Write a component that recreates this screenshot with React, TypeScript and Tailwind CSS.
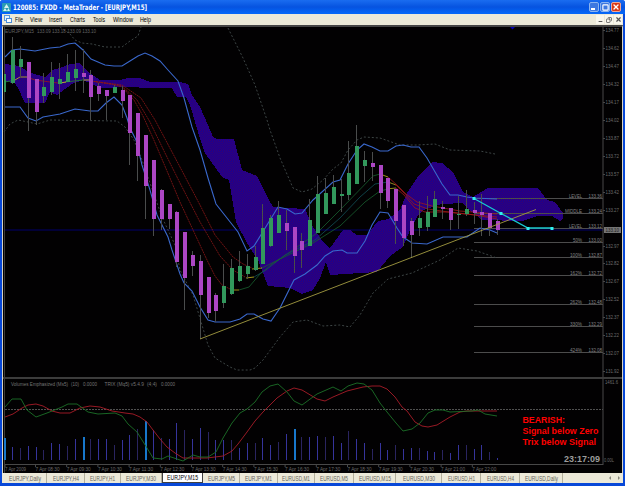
import { Minus, Copy, X, Square } from 'lucide-react';

type Candle = [high: number, top: number, bottom: number, low: number, up: 0 | 1];

const candles: Candle[] = [
  [74, 74, 92, 92, 1], [37, 50, 83, 84, 1], [46, 59, 67, 78, 1], [62, 62, 98, 131, 0],
  [79, 79, 112, 125, 0], [73, 87, 96, 103, 1], [62, 77, 92, 95, 1], [63, 79, 84, 99, 1],
  [54, 72, 82, 82, 1], [50, 69, 78, 91, 1], [49, 73, 77, 93, 0], [70, 75, 97, 120, 0],
  [83, 86, 94, 101, 0], [90, 90, 96, 120, 0], [85, 87, 93, 93, 1], [86, 90, 101, 118, 0],
  [95, 95, 133, 165, 0], [113, 113, 156, 181, 0], [135, 135, 186, 219, 0], [160, 160, 219, 236, 0],
  [189, 190, 219, 230, 0], [204, 204, 219, 229, 0], [211, 212, 262, 267, 0], [232, 232, 278, 310, 0],
  [251, 255, 266, 276, 0], [255, 261, 295, 339, 0], [277, 277, 313, 318, 0], [293, 295, 311, 322, 0],
  [264, 286, 303, 308, 1], [259, 268, 294, 295, 1], [251, 266, 281, 282, 1], [254, 266, 274, 279, 1],
  [246, 257, 270, 271, 1], [204, 228, 264, 264, 1], [215, 218, 246, 247, 1], [201, 215, 233, 233, 1],
  [210, 223, 231, 250, 0], [227, 227, 256, 273, 0], [233, 241, 250, 268, 0], [199, 220, 246, 246, 1],
  [176, 194, 233, 233, 1], [178, 193, 214, 214, 1], [175, 187, 204, 204, 1], [179, 194, 196, 212, 1],
  [141, 173, 195, 200, 1], [125, 146, 184, 184, 1], [151, 160, 166, 182, 1], [152, 163, 167, 181, 0],
  [165, 165, 193, 209, 0], [178, 178, 201, 208, 0], [189, 189, 221, 244, 0], [205, 205, 238, 246, 0],
  [218, 221, 235, 258, 0], [201, 218, 228, 236, 1], [196, 212, 227, 231, 1], [191, 199, 217, 217, 1],
  [201, 207, 209, 219, 0], [208, 208, 220, 230, 0], [196, 214, 215, 229, 1], [190, 209, 214, 216, 1],
  [202, 210, 213, 224, 0], [194, 212, 215, 236, 0], [213, 213, 228, 236, 0], [219, 221, 230, 235, 0],
];

// tops of the volume bars, they all stand on y = 460
const volumes = [
  438, 447, 448, 446, 447, 450, 443, 444, 446, 439, 437, 439, 439, 439, 445, 440,
  435, 429, 421, 430, 438, 439, 423, 430, 439, 428, 432, 440, 440, 440, 448, 443,
  443, 438, 445, 442, 434, 429, 437, 437, 436, 437, 436, 443, 431, 439, 443, 449,
  443, 450, 445, 449, 448, 448, 451, 452, 450, 453, 445, 445, 449, 445, 452, 458,
];
const spikes = [0, 10, 18, 37];

const upperBand =
  '5,57 12,50 20,49 35,51 50,48 60,47 68,44 75,43 83,50 91,59 105,65 114,66 122,66 130,61 138,56 145,53 152,56 160,61 168,70 178,81 184,98 192,127 200,150 208,178 216,204 227,218 238,232 247,251 254,246 267,225 278,207 287,209 295,214 302,213 313,200 333,182 340,180 348,164 357,150 364,144 372,147 380,151 388,151 396,146 403,145 411,147 419,147 427,158 442,184 450,195 458,195 467,197 474,198 497,199';
const lowerBand =
  '5,107 20,107 28,118 36,121 43,117 60,114 75,109 90,111 98,111 106,103 114,97 122,105 127,118 130,128 136,140 142,165 150,190 157,215 168,237 172,250 180,274 184,283 192,291 200,307 208,320 215,322 230,322 240,319 247,314 254,314 263,319 271,321 280,308 294,280 305,274 317,265 325,256 333,251 342,250 347,253 357,253 365,241 372,225 380,212 388,213 397,228 403,237 412,243 427,244 443,237 467,237 480,228 490,230 497,233';
const outerBands = [
  '60,27 70,34 75,40 82,43 92,44 105,47 122,47 130,41 138,36 141,27',
  '228,28 243,58 255,85 267,120 270,130 280,158 293,188 302,192 312,189 323,180 333,169 341,163 348,150 357,140 364,137 380,138 400,145 417,145 435,144 450,150 480,151 495,154',
  '4,132 10,124 18,120 28,122 37,124 50,120 117,121 125,127 134,140 142,160 150,183 162,217 175,245 180,270 193,295 202,325 208,345 215,358 230,367 237,370 250,370 255,368 263,360 280,337 293,322 307,320 323,326 340,325 350,327 360,315 373,293 388,279 412,273 440,260 458,248 477,251 497,258',
];
const cloud =
  '5,64 20,66 28,72 45,77 52,70 60,68 70,64 80,63 88,72 100,80 120,80 128,78 140,78 150,82 180,82 188,84 192,95 200,107 205,118 213,137 217,139 234,139 242,170 257,176 268,198 273,207 305,209 313,227 323,242 330,248 343,230 350,230 357,235 367,235 378,221 388,219 400,210 407,193 417,178 432,162 442,163 453,172 463,192 473,197 488,188 538,188 547,200 555,202 563,213 563,218 560,221 552,216 537,216 522,221 482,220 467,208 463,203 442,204 423,210 417,217 410,230 403,247 390,256 377,272 330,275 326,262 320,278 313,290 302,294 290,288 268,286 258,260 247,243 236,222 229,180 222,177 205,153 198,132 190,105 186,97 177,97 172,88 150,88 127,87 100,88 92,84 83,80 72,84 57,95 50,92 45,103 25,103 18,88 15,83 5,82';

const averages: [string, string][] = [
  ['#1f8f1f', '5,82 15,80'],
  ['#c8b820', '15,80 20,77 27,77'],
  ['#a01818', '27,77 35,80 58,83'],
  ['#1f8f1f', '65,82 83,80'],
  ['#e0d020', '60,83 66,82'],
  ['#e0d020', '83,80 91,80'],
  ['#8c1818', '91,81 112,84 122,87 134,100 143,116 153,138 167,171 180,202 207,260 215,276 222,285 230,289'],
  ['#8c1818', '91,81 122,86 137,100 150,122 165,153 180,183 200,222 220,256 233,270 245,277'],
  ['#8c1818', '91,81 122,85 141,98 155,120 180,167 200,205 215,235 233,257 243,264 252,268'],
  ['#c8b820', '230,290 239,290'],
  ['#c8b820', '246,278 254,277'],
  ['#c8b820', '252,269 262,268'],
  ['#186030', '239,290 249,287 260,274 272,264 290,252 317,233 340,210 373,176 380,174'],
  ['#125058', '254,277 266,270 285,255 315,240 340,218 360,197 375,184 388,182'],
  ['#186030', '262,268 280,259 313,243 340,226 365,202 380,191 388,189'],
  ['#c8b820', '380,174 388,177'],
  ['#b8a828', '388,182 396,185'],
  ['#b8a828', '386,189 396,188'],
  ['#a01818', '388,177 398,186 406,194 417,202 432,206 460,211 497,214'],
  ['#a01818', '395,184 403,192 414,204 428,209 455,213 497,217'],
  ['#a01818', '396,188 404,195 415,208 425,212 450,212 475,215 497,219'],
];

const trix =
  '5,407 12,399 21,399 27,410 36,417 47,413 62,407 68,404 77,404 88,412 98,414 115,413 122,416 128,424 137,432 147,448 153,458 162,459 168,456 177,459 183,461 193,455 200,457 208,457 216,452 223,438 232,423 240,413 247,409 255,402 262,392 270,386 278,384 287,392 294,401 302,405 317,394 333,387 341,391 348,386 357,383 364,384 372,390 380,403 387,412 396,423 403,431 412,429 420,423 428,413 435,410 443,410 450,412 472,411 478,410 485,414 497,416';
const signal =
  '5,417 13,414 22,408 28,405 36,404 43,406 52,411 60,413 70,413 80,408 90,406 100,407 112,411 125,413 133,414 140,417 147,422 153,430 160,439 167,447 175,453 183,458 207,458 223,456 232,451 238,444 247,432 255,421 263,412 277,398 287,391 294,388 302,390 317,399 325,401 333,397 347,391 363,387 372,386 380,386 387,389 395,397 402,407 407,411 415,422 422,426 428,427 437,425 450,417 460,412 467,411 497,411';

const levels: [number, string, number, string][] = [
  [198, 'LEVEL', 13, '133.36'], [213, 'MIDDLE', 17, '133.24'], [228, 'LEVEL', 13, '133.12'],
  [242, '50%', 9, '133.00'], [257, '100%', 12, '132.87'], [275, '162%', 12, '132.72'],
  [304, '262%', 12, '132.48'], [326, '330%', 12, '132.29'], [352, '424%', 12, '132.08'],
];

const prices: [number, string][] = [
  [30, '134.77'], [48, '134.62'], [66, '134.47'], [84, '134.32'], [102, '134.17'],
  [120, '134.02'], [138, '133.87'], [156, '133.72'], [174, '133.57'], [192, '133.42'],
  [210, '133.27'], [246, '132.97'], [263, '132.82'], [281, '132.67'], [299, '132.52'],
  [317, '132.37'], [335, '132.22'], [353, '132.07'], [371, '131.92'],
];

const times = [
  '7 Apr 2009', '7 Apr 08:30', '7 Apr 09:30', '7 Apr 10:30', '7 Apr 11:30', '7 Apr 12:30', '7 Apr 13:30',
  '7 Apr 14:30', '7 Apr 15:30', '7 Apr 16:30', '7 Apr 17:30', '7 Apr 18:30', '7 Apr 19:30', '7 Apr 20:30',
  '7 Apr 21:00', '7 Apr 22:00',
];

const menus: [string, string, number][] = [
  ['File', 'w-[15px]', 8], ['View', 'w-[19px]', 12], ['Insert', 'w-[21px]', 13], ['Charts', 'w-[23px]', 15],
  ['Tools', 'w-[20px]', 12], ['Window', 'w-[27px]', 20], ['Help', 'w-[14px]', 11],
];

const tabs: [string, string, number][] = [
  ['EURJPY,Daily', 'w-[43px]', 32], ['EURJPY,H4', 'w-[38px]', 26], ['EURJPY,H1', 'w-[36px]', 25],
  ['EURJPY,M30', 'w-[41px]', 30], ['EURJPY,M15', 'w-[41px]', 31], ['EURJPY,M5', 'w-[37px]', 27],
  ['EURJPY,M1', 'w-[38px]', 27], ['EURUSD,M1', 'w-[37px]', 28], ['EURUSD,M5', 'w-[39px]', 28],
  ['EURUSD,M15', 'w-[42px]', 32], ['EURUSD,M30', 'w-[46px]', 32], ['EURUSD,H1', 'w-[39px]', 27],
  ['EURUSD,H4', 'w-[39px]', 27], ['EURUSD,Daily', 'w-[43px]', 33],
];

const barX = (i: number) => Math.round(4.3 + i * 7.82);

interface FitTextProps {
  x: number;
  y: number;
  width: number;
  text: string;
  className?: string;
}

// Text squeezed or stretched to a fixed width
function FitText({ x, y, width, text, className }: FitTextProps) {
  return (
    <text x={x} y={y} textLength={width} lengthAdjust="spacingAndGlyphs" className={className}>
      {text}
    </text>
  );
}

function Label({ text, width, className }: { text: string; width: number; className: string }) {
  return (
    <svg width={width} height="9" className="shrink-0 overflow-visible">
      <FitText x={0} y={7} width={width} text={text} className={className} />
    </svg>
  );
}

function TitleBar() {
  return (
    <header className="flex h-[14px] shrink-0 items-center bg-gradient-to-b from-[#1a6cf0] via-[#0653e0] to-[#0468fa] pr-[4px] pl-[2px]">
      <svg width="9" height="9" viewBox="0 0 9 9">
        <rect width="9" height="9" rx="1" fill="#2a9cb4" />
        <path d="M4.5 1 7 5H2zM1 8l2-3 2 3zM5 8l1.5-3L8 8z" fill="#d8f4f0" />
      </svg>
      <div className="ml-[2px] flex-1">
        <Label
          text="120085: FXDD - MetaTrader - [EURJPY,M15]"
          width={134}
          className="fill-white font-['DejaVu_Sans',sans-serif] text-[7.5px] font-bold"
        />
      </div>
      <div className="flex gap-[1px]">
        <span className="flex h-[10px] w-[10px] items-end rounded-[2px] border border-[#8ab4f0] bg-[#3d78e0] p-[1px]">
          <i className="h-[2px] w-[4px] bg-white" />
        </span>
        <span className="flex h-[10px] w-[10px] items-center justify-center rounded-[2px] border border-[#8ab4f0] bg-[#3d78e0]">
          <Square className="h-[7px] w-[7px] text-white" strokeWidth={4} />
        </span>
        <span className="flex h-[10px] w-[10px] items-center justify-center rounded-[2px] border border-[#f0a898] bg-[#d83818]">
          <X className="h-[8px] w-[8px] text-white" strokeWidth={4} />
        </span>
      </div>
    </header>
  );
}

function MenuBar() {
  return (
    <nav className="flex h-[11px] shrink-0 items-center bg-[#ece9d8] pl-[2px]">
      <svg width="8" height="9" viewBox="0 0 8 9" className="mr-[3px]">
        <rect x=".5" y=".5" width="5" height="5" fill="#e8f4ff" stroke="#5c9ae0" />
        <rect x="2.5" y="3.5" width="5" height="4" fill="#fff" stroke="#4a8cd8" />
      </svg>
      {menus.map(([name, cell, width]) => (
        <div key={name} className={cell}>
          <Label text={name} width={width} className="fill-black text-[7px]" />
        </div>
      ))}
      <div className="ml-auto flex items-center gap-[1px] pr-[1px] text-[#555]">
        <span className="flex h-[9px] w-[8px] items-end justify-center bg-[#f8f6ec]">
          <Minus className="h-[5px] w-[5px]" strokeWidth={5} />
        </span>
        <span className="flex h-[9px] w-[8px] items-center justify-center bg-[#f8f6ec]">
          <Copy className="h-[6px] w-[6px] -scale-x-100" strokeWidth={3} />
        </span>
        <span className="flex h-[9px] w-[8px] items-center justify-center bg-[#f8f6ec]">
          <X className="h-[7px] w-[7px]" strokeWidth={4} />
        </span>
      </div>
    </nav>
  );
}

function PriceChart() {
  return (
    <svg width="619" height="350" viewBox="3 27 619 350" className="block shrink-0">
      <defs>
        <pattern id="dither" width="4" height="4" patternUnits="userSpaceOnUse">
          <path
            d="M0 0h1v1H0zM2 0h1v1H2zM1 1h1v1H1zM3 1h1v1H3zM0 2h1v1H0zM2 2h1v1H2zM1 3h1v1H1zM3 3h1v1H3z"
            fill="#700030"
            fillOpacity="0.42"
            shapeRendering="crispEdges"
          />
        </pattern>
      </defs>
      <path d="M4.5 27v350" stroke="#3c3c3c" />
      <path d="M5 230h598" stroke="#00006c" />
      <path d="M510 27h5l-2.500 2.500z" fill="#0000b0" />
      <polygon points={cloud} fill="#140098" shapeRendering="crispEdges" />
      <polygon points={cloud} fill="url(#dither)" shapeRendering="crispEdges" />

      <g shapeRendering="crispEdges">
        {levels.map(([y]) => (
          <path key={y} d={`M474 ${y + 0.5}H603`} stroke="#4c4c4c" />
        ))}
      </g>
      <g fill="none" stroke="#3c4444" strokeDasharray="2 2">
        {outerBands.map((points) => (
          <polyline key={points} points={points} />
        ))}
      </g>

      <g fill="none" strokeWidth="0.8">
        {averages.map(([color, points]) => (
          <polyline key={points} points={points} stroke={color} strokeDasharray={color === '#8c1818' ? '2 .6' : undefined} />
        ))}
      </g>
      <g fill="none" stroke="#3a68cc" strokeWidth="1.1">
        <polyline points={upperBand} />
        <polyline points={lowerBand} />
      </g>

      <g shapeRendering="crispEdges">
        {candles.map(([high, top, bottom, low, up], i) => (
          <g key={i}>
            <rect x={barX(i)} y={high} width="1" height={low - high} fill="#4a4c4c" />
            <rect x={i === 0 ? 4 : barX(i) - 1} y={top} width={i === 0 ? 2 : 4} height={bottom - top} fill={up ? '#32985c' : '#ac46c4'} />
          </g>
        ))}
      </g>

      <path d="M200 339 536 209.500" stroke="#a49c42" strokeWidth="0.9" />
      <path d="M474 198.500 501 213.500 528 228H552" fill="none" stroke="#18c8d0" strokeWidth="1.3" />
      {[[474, 198], [501, 213], [528, 228], [552, 228]].map(([x, y]) => (
        <rect key={x} x={x - 1.5} y={y - 1} width="3" height="3" fill="#30f0f0" />
      ))}

      <g className="fill-[#848484] text-[5.500px]">
        {levels.map(([y, name, width, value]) => (
          <g key={y}>
            <FitText x={582 - width} y={y - 0.3} width={width} text={name} />
            <FitText x={588.5} y={y - 0.3} width={13.5} text={value} />
          </g>
        ))}
      </g>
      <g className="fill-[#646464] text-[5.500px]">
        <FitText x={5} y={32.5} width={29} text="EURJPY,M15" />
        <FitText x={37} y={32.5} width={59} text="133.09 133.18 133.09 133.10" />
      </g>

      <path d="M603 27v350" stroke="#484848" />
      <g className="fill-[#6c6c6c] text-[5.500px]">
        {prices.map(([y, price]) => (
          <g key={y}>
            <path d={`M603 ${y + 0.5}h2`} stroke="#484848" />
            <FitText x={605.5} y={y + 2.2} width={13.5} text={price} />
          </g>
        ))}
      </g>
      <rect x="604" y="227" width="17" height="6" fill="#747474" />
      <FitText x={605.5} y={232} width={13.5} text="133.10" className="fill-[#1c1c1c] text-[5.500px]" />
    </svg>
  );
}

function IndicatorPane() {
  return (
    <svg width="619" height="94" viewBox="3 379 619 94" className="block shrink-0">
      <path d="M4.5 379v94" stroke="#3c3c3c" />
      <path d="M5 409.500h598" stroke="#505050" strokeDasharray="2 1" />
      <g shapeRendering="crispEdges">
        {volumes.map((top, i) => {
          const spike = spikes.includes(i);
          return (
            <rect
              key={i}
              x={barX(i)}
              y={top}
              width={spike ? 2 : 1}
              height={460 - top}
              fill={spike ? '#1878cc' : i % 3 === 2 ? '#2a2460' : '#36349c'}
            />
          );
        })}
      </g>
      <polyline points={signal} fill="none" stroke="#a81c28" strokeWidth="0.9" />
      <polyline points={trix} fill="none" stroke="#1c7028" strokeWidth="0.9" />

      <g className="fill-[#747474] text-[4.800px]">
        <FitText x={11} y={386} width={57} text="Volumes Emphasized (Ms5)" />
        <FitText x={71} y={386} width={8} text="(10)" />
        <FitText x={83} y={386} width={14} text="0.0000" />
        <FitText x={104.5} y={386} width={39.5} text="TRIX (Mq5) v5.4.9" />
        <FitText x={147} y={386} width={10} text="(4;4)" />
        <FitText x={161} y={386} width={14} text="0.0000" />
      </g>

      <g className="fill-[#ff0000] text-[9.500px] font-bold">
        <FitText x={522.5} y={423} width={42.5} text="BEARISH:" />
        <FitText x={522.5} y={434} width={76} text="Signal below Zero" />
        <FitText x={522.5} y={444.5} width={73.5} text="Trix below Signal" />
      </g>
      <FitText x={564} y={462} width={36} text="23:17:09" className="fill-[#9c9c9c] text-[9px] font-bold" />

      <path d="M5 464.500h598" stroke="#484848" />
      <path d="M603 379v86" stroke="#484848" />
      <g className="fill-[#6c6c6c] text-[5.500px]">
        {times.map((time, i) => {
          const x = i === 0 ? 5 : 4.3 + i * 31.2;
          return (
            <g key={time}>
              <path d={`M${x} 465v2`} stroke="#484848" />
              <FitText x={x} y={470.5} width={i === 0 ? 21 : 24} text={time} />
            </g>
          );
        })}
        <FitText x={605} y={384} width={13} text="1461.6" />
        <FitText x={604} y={462} width={10} text="0.00L" />
      </g>
    </svg>
  );
}

function ChartTabs() {
  return (
    <footer className="flex h-[10px] shrink-0 items-center bg-[#ece9d8] pl-[2px]">
      {tabs.map(([name, cell, width]) => (
        <div
          key={name}
          className={`${cell} flex h-full shrink-0 items-center justify-center border-r ${
            name === 'EURJPY,M15' ? 'border-x border-b border-[#404040] bg-white' : 'border-r-[#b4b09c]'
          }`}
        >
          <Label text={name} width={width} className={name === 'EURJPY,M15' ? 'fill-black text-[6.500px]' : 'fill-[#66665c] text-[6.500px]'} />
        </div>
      ))}
      <svg width="14" height="5" viewBox="0 0 14 5" className="mr-[1px] ml-auto" fill="#88887c">
        <path d="M3 0v4L1 2zM10 0v4l2-2z" />
      </svg>
    </footer>
  );
}

export default function App() {
  return (
    <main className="flex h-[486px] w-[625px] flex-col overflow-hidden rounded-t-[3px] bg-[#0848d8] font-['Liberation_Sans',sans-serif]">
      <TitleBar />
      <div className="mr-[2px] ml-[2px] flex flex-col">
        <MenuBar />
        <div className="border-x border-t-2 border-x-[#d8d4c4] border-t-[#444] bg-[#020102]">
          <PriceChart />
          <div className="h-[2px] w-full bg-[#3c3c3c]" />
          <IndicatorPane />
        </div>
        <ChartTabs />
      </div>
    </main>
  );
}
